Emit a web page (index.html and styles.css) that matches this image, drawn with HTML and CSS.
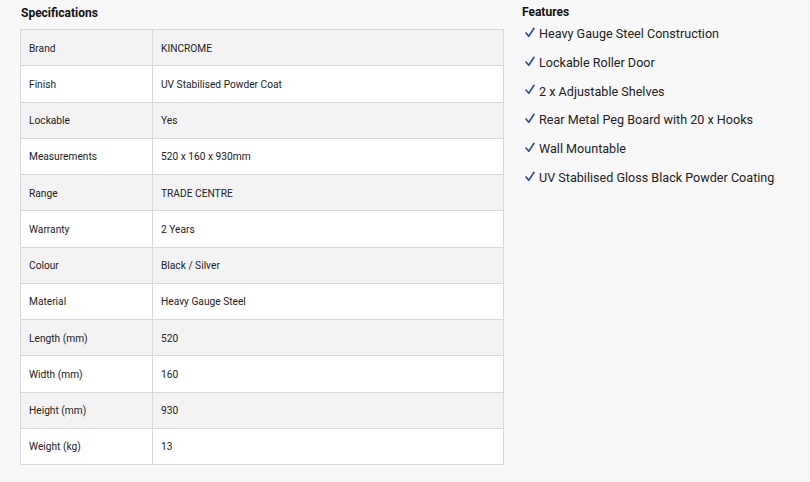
FILE: index.html
```html
<!DOCTYPE html>
<html>
<head>
<meta charset="utf-8">
<link rel="stylesheet" href="styles.css">
</head>
<body>
<div class="page">
  <section class="specs">
    <h2 class="title">Specifications</h2>
    <table class="spec-table">
      <tr><td class="k">Brand</td><td>KINCROME</td></tr>
      <tr><td class="k">Finish</td><td>UV Stabilised Powder Coat</td></tr>
      <tr><td class="k">Lockable</td><td>Yes</td></tr>
      <tr><td class="k">Measurements</td><td>520 x 160 x 930mm</td></tr>
      <tr><td class="k">Range</td><td>TRADE CENTRE</td></tr>
      <tr><td class="k">Warranty</td><td>2 Years</td></tr>
      <tr><td class="k">Colour</td><td>Black / Silver</td></tr>
      <tr><td class="k">Material</td><td>Heavy Gauge Steel</td></tr>
      <tr><td class="k">Length (mm)</td><td>520</td></tr>
      <tr><td class="k">Width (mm)</td><td>160</td></tr>
      <tr><td class="k">Height (mm)</td><td>930</td></tr>
      <tr><td class="k">Weight (kg)</td><td>13</td></tr>
    </table>
  </section>
  <section class="features">
    <h2 class="ftitle">Features</h2>
    <ul class="flist">
      <li><svg class="tick" viewBox="0 0 10 11" width="10" height="11"><path d="M1 6 L3.8 9.2 L9 1.3" fill="none" stroke="#2b4a9b" stroke-width="1.6" stroke-linecap="round" stroke-linejoin="round"/></svg>Heavy Gauge Steel Construction</li>
      <li><svg class="tick" viewBox="0 0 10 11" width="10" height="11"><path d="M1 6 L3.8 9.2 L9 1.3" fill="none" stroke="#2b4a9b" stroke-width="1.6" stroke-linecap="round" stroke-linejoin="round"/></svg>Lockable Roller Door</li>
      <li><svg class="tick" viewBox="0 0 10 11" width="10" height="11"><path d="M1 6 L3.8 9.2 L9 1.3" fill="none" stroke="#2b4a9b" stroke-width="1.6" stroke-linecap="round" stroke-linejoin="round"/></svg>2 x Adjustable Shelves</li>
      <li><svg class="tick" viewBox="0 0 10 11" width="10" height="11"><path d="M1 6 L3.8 9.2 L9 1.3" fill="none" stroke="#2b4a9b" stroke-width="1.6" stroke-linecap="round" stroke-linejoin="round"/></svg>Rear Metal Peg Board with 20 x Hooks</li>
      <li><svg class="tick" viewBox="0 0 10 11" width="10" height="11"><path d="M1 6 L3.8 9.2 L9 1.3" fill="none" stroke="#2b4a9b" stroke-width="1.6" stroke-linecap="round" stroke-linejoin="round"/></svg>Wall Mountable</li>
      <li><svg class="tick" viewBox="0 0 10 11" width="10" height="11"><path d="M1 6 L3.8 9.2 L9 1.3" fill="none" stroke="#2b4a9b" stroke-width="1.6" stroke-linecap="round" stroke-linejoin="round"/></svg>UV Stabilised Gloss Black Powder Coating</li>
    </ul>
  </section>
</div>
</body>
</html>
```
FILE: styles.css
```css
html, body { margin: 0; padding: 0; }
body {
  background: #f8f8f8;
  font-family: Roboto, "Liberation Sans", sans-serif;
  color: #222;
  width: 810px;
  height: 482px;
  overflow: hidden;
}
.page {
  display: flex;
  padding: 0 0 0 20px;
}
.specs { width: 484px; }
.title {
  margin: 0;
  font-size: 12px;
  font-weight: 700;
  line-height: 16px;
  padding: 5px 0 8px 1px;
  color: #111;
}
.spec-table {
  width: 484px;
  border-collapse: collapse;
  font-size: 10.2px;
  border: 1px solid #d4d4d4;
}
.spec-table td {
  border: 1px solid #d8d8d8;
  height: 34.25px;
  padding: 1px 0 0 8px;
  vertical-align: middle;
}
.spec-table td.k { width: 123px; }
.spec-table tr:nth-child(odd) td { background: #f3f3f3; }
.spec-table tr:nth-child(even) td { background: #fff; }
.features {
  margin-left: 18px;
}
.ftitle {
  margin: 0;
  font-size: 12px;
  font-weight: 700;
  line-height: 16px;
  padding-top: 4px;
  color: #111;
}
.flist {
  list-style: none;
  margin: 0;
  padding: 3px 0 0;
}
.flist li {
  font-size: 12.6px;
  line-height: 29px;
  height: 28.8px;
  margin-top: -4px;
  margin-bottom: 4px;
  display: flex;
  align-items: center;
}
.tick {
  flex: none;
  margin: -2px 4px 0 3px;
}
```
